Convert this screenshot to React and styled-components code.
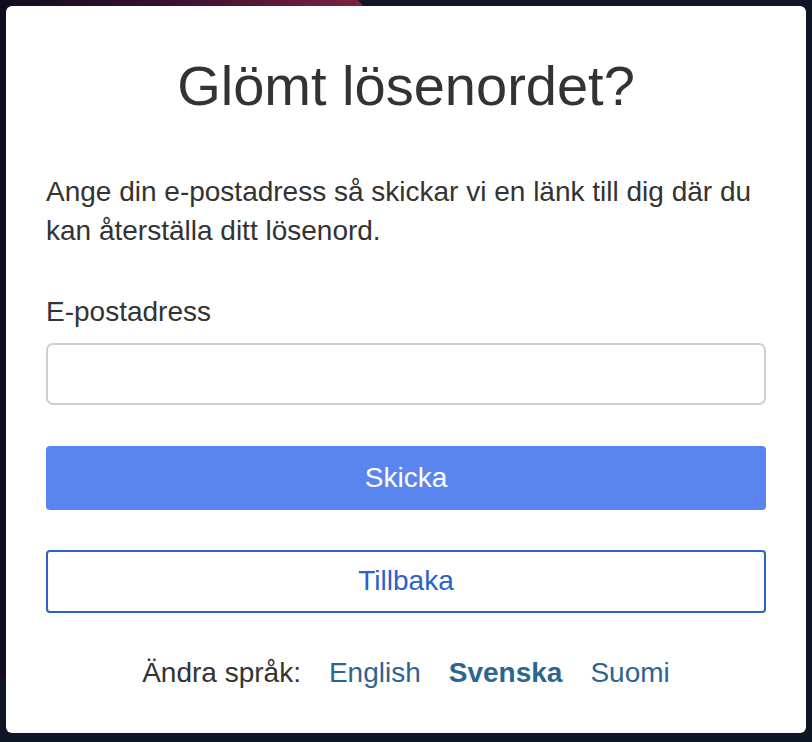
import React from "react";
import styled, { createGlobalStyle } from "styled-components";

const GlobalStyle = createGlobalStyle`
  html, body {
    margin: 0;
    padding: 0;
  }
  body {
    background: #0f1626;
    font-family: "Liberation Sans", Arial, sans-serif;
    color: #333333;
    min-height: 100vh;
  }
  * { box-sizing: border-box; }
`;

const Page = styled.div`
  position: relative;
  min-height: 100vh;
  padding: 6px 6px 8px;
  overflow: hidden;

  &::before {
    content: "";
    position: absolute;
    left: -322px;
    top: -114px;
    width: 800px;
    height: 800px;
    border-radius: 50%;
    background: linear-gradient(90deg, #0d0c1c 38%, #3a1030 62%, #7b2243 86%);
    z-index: 0;
  }
`;

const Card = styled.main`
  position: relative;
  z-index: 1;
  width: 800px;
  padding: 46px 40px 41px;
  background: #ffffff;
  border-radius: 6px;
  display: flex;
  flex-direction: column;
`;

const Title = styled.h1`
  margin: 0;
  font-size: 56px;
  font-weight: 400;
  line-height: 1.2;
  text-align: center;
  color: #333333;
`;

const Intro = styled.p`
  margin: 53px 0 0;
  font-size: 28px;
  line-height: 1.4;
  color: #333333;
`;

const Label = styled.label`
  display: block;
  margin-top: 41px;
  font-size: 28px;
  line-height: 1.4;
  color: #333333;
`;

const Input = styled.input`
  display: block;
  width: 100%;
  height: 62px;
  margin-top: 12px;
  padding: 0 16px;
  border: 2px solid #cfcfcf;
  border-radius: 7px;
  font-family: inherit;
  font-size: 28px;
  color: #333333;
  background: #ffffff;
  outline: none;
`;

const Button = styled.button`
  display: flex;
  align-items: center;
  justify-content: center;
  width: 100%;
  height: ${(p) => (p.$variant === "primary" ? "64px" : "63px")};
  margin-top: ${(p) => (p.$variant === "primary" ? "41px" : "40px")};
  border-radius: 4px;
  font-family: inherit;
  font-size: 28px;
  cursor: pointer;
  background: ${(p) => (p.$variant === "primary" ? "#5b85ee" : "#ffffff")};
  color: ${(p) => (p.$variant === "primary" ? "#ffffff" : "#2b62c9")};
  border: ${(p) => (p.$variant === "primary" ? "none" : "2px solid #2b62c9")};
`;

const LangRow = styled.nav`
  display: flex;
  justify-content: center;
  align-items: baseline;
  gap: 28px;
  margin-top: 40px;
  font-size: 28px;
  line-height: 1.4;
`;

const LangLabel = styled.span`
  color: #333333;
`;

const LangLink = styled.a`
  color: #2d6591;
  text-decoration: none;
  font-weight: ${(p) => (p.$active ? 700 : 400)};
`;

export default function App() {
  return (
    <>
      <GlobalStyle />
      <Page>
        <Card>
          <Title>Glömt lösenordet?</Title>
          <Intro>
            Ange din e-postadress så skickar vi en länk till dig där du kan
            återställa ditt lösenord.
          </Intro>
          <Label htmlFor="email">E-postadress</Label>
          <Input id="email" type="email" />
          <Button $variant="primary">Skicka</Button>
          <Button $variant="secondary">Tillbaka</Button>
          <LangRow>
            <LangLabel>Ändra språk:</LangLabel>
            <LangLink href="#">English</LangLink>
            <LangLink href="#" $active>
              Svenska
            </LangLink>
            <LangLink href="#">Suomi</LangLink>
          </LangRow>
        </Card>
      </Page>
    </>
  );
}
